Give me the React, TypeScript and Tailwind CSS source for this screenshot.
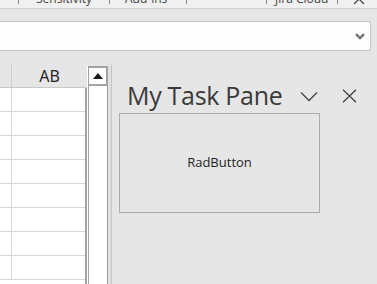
import React from "react";

const ROWS = [0, 1, 2, 3, 4, 5, 6, 7];

function Sep() {
  return <span className="block h-[4px] w-px shrink-0 bg-[#8c8c8c]" />;
}

export default function App() {
  return (
    <div
      className="flex h-[284px] w-[377px] flex-col overflow-hidden bg-[#e6e6e6]"
      style={{ fontFamily: '"Open Sans", "Noto Sans", sans-serif' }}
    >
      {/* ribbon tabs, cut off at the top */}
      <div className="flex h-[9px] shrink-0 items-start overflow-hidden border-b border-[#d2d2d2] bg-[#f0f0f0] text-[12px] leading-[12px] text-[#444]">
        <div className="ml-[18px] flex items-start">
          <Sep />
        </div>
        <span className="-mt-[7px] ml-[17px] w-[56px] whitespace-nowrap">Sensitivity</span>
        <div className="ml-[17px]">
          <Sep />
        </div>
        <span className="-mt-[7px] ml-[15px] w-[46px] whitespace-nowrap">Add-ins</span>
        <div className="ml-[15px]">
          <Sep />
        </div>
        <div className="ml-auto flex items-start">
          <Sep />
          <span className="-mt-[7px] ml-[8px] w-[62px] whitespace-nowrap">Jira Cloud</span>
          <Sep />
          <svg className="-mt-[7px] ml-[15px] mr-[12px]" width="12" height="12" viewBox="0 0 12 12">
            <path d="M1 1 L11 11 M11 1 L1 11" stroke="#444" strokeWidth="1.3" />
          </svg>
        </div>
      </div>

      {/* formula / name box */}
      <div className="ml-[-1px] mt-[12px] flex h-[30px] w-[372px] shrink-0 items-center justify-end border border-[#c6c6c6] bg-[#fdfdfd] pr-[5px]">
        <svg width="10" height="7" viewBox="0 0 10 7">
          <path d="M1 1.2 L5 5 L9 1.2" fill="none" stroke="#707070" strokeWidth="2.4" />
        </svg>
      </div>

      {/* sheet + task pane */}
      <div className="mt-[13px] flex flex-1">
        {/* sheet */}
        <div className="flex w-[87px] shrink-0 flex-col">
          <div className="flex h-[24px] shrink-0 border-b border-[#c9c9c9]">
            <div className="w-[12px] border-r border-[#d0d0d0]" />
            <div
              className="flex flex-1 items-center justify-center text-[16px] text-[#262626]"
              style={{ fontFamily: '"Noto Sans", sans-serif' }}
            >
              AB
            </div>
          </div>
          <div className="flex flex-1 flex-col border-r-2 border-[#a3a3a3] bg-white">
            {ROWS.map((r) => (
              <div key={r} className="flex h-[24px] shrink-0 border-b border-[#d6d6d6]">
                <div className="w-[12px] border-r border-[#d6d6d6]" />
                <div className="flex-1" />
              </div>
            ))}
          </div>
        </div>

        {/* vertical scrollbar */}
        <div className="flex w-[21px] shrink-0 flex-col">
          <div className="flex h-[2px] shrink-0" />
          <div className="flex flex-1 flex-col border-r border-[#9f9f9f] bg-white">
            <div className="ml-[1px] flex h-[20px] shrink-0 items-center justify-center border-x border-t-2 border-b-2 border-[#a3a3a3] bg-white">
              <svg width="10" height="6" viewBox="0 0 10 6">
                <path d="M0 6 L5 0 L10 6 Z" fill="#1a1a1a" />
              </svg>
            </div>
            <div className="ml-[1px] flex-1 border-l border-[#a3a3a3]" />
          </div>
        </div>

        <div className="w-[3px] shrink-0 bg-[#e0e0e0]" />

        {/* task pane */}
        <div className="mt-[1px] flex flex-1 flex-col border-l border-[#c4c4c4]">
          <div className="mt-[12px] flex h-[36px] shrink-0 items-center pl-[15px]">
            <span
              className="whitespace-nowrap text-[25px] font-normal leading-none tracking-[-0.3px] text-[#3a3a3a]"
              style={{ fontFamily: '"Open Sans", sans-serif' }}
            >
              My Task Pane
            </span>
            <svg className="ml-[18px] mt-[3px]" width="18" height="11" viewBox="0 0 18 11">
              <path d="M1 1.5 L9 9.5 L17 1.5" fill="none" stroke="#444" strokeWidth="1.3" />
            </svg>
            <svg className="ml-[24px] mt-[2px]" width="15" height="14" viewBox="0 0 15 14">
              <path d="M1 0.8 L14 13.2 M14 0.8 L1 13.2" fill="none" stroke="#444" strokeWidth="1.3" />
            </svg>
          </div>
          <div className="ml-[7px] flex h-[100px] w-[201px] shrink-0 items-center justify-center border border-[#ababab] bg-[#e6e6e6]">
            <span className="text-[13px] text-[#1e1e1e]" style={{ fontFamily: '"Open Sans", sans-serif' }}>
              RadButton
            </span>
          </div>
        </div>
      </div>
    </div>
  );
}
